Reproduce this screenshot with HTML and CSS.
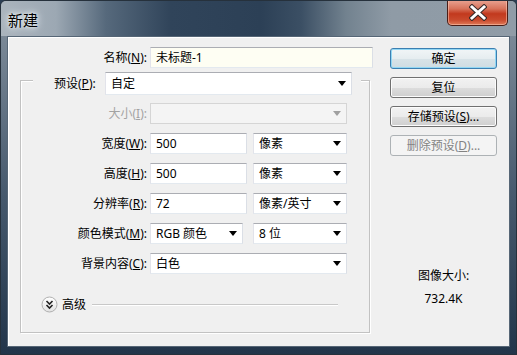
FILE: index.html
```html
<!DOCTYPE html>
<html lang="zh-CN">
<head>
	<meta charset="UTF-8">
	<meta name="viewport" content="width=device-width, initial-scale=1.0">
	<title>新建</title>
	<link rel="stylesheet" href="styles.css">
</head>
<body>
	<div class="window">
		<header class="titlebar">
			<span class="title">新建</span>
			<div class="close">
				<svg width="18" height="17" viewBox="0 0 18 17">
					<path d="M3 3 L15 14 M15 3 L3 14" stroke="#3a2a28" stroke-width="5" stroke-linecap="square" fill="none"/>
					<path d="M3 3 L15 14 M15 3 L3 14" stroke="#fff" stroke-width="3" stroke-linecap="square" fill="none"/>
				</svg>
			</div>
		</header>
		<div class="client">
			<div class="left">
				<div class="row name-row">
					<label class="lbl">名称(<u>N</u>):</label>
					<span class="field text name">未标题-1</span>
				</div>
				<div class="group">
					<div class="preset-row">
						<label class="plbl">预设(<u>P</u>):</label>
						<span class="field select preset">自定<i class="arrow"></i></span>
					</div>
					<div class="row disabled">
						<label class="lbl">大小(<u>I</u>):</label>
						<span class="field select full"><i class="arrow"></i></span>
					</div>
					<div class="row">
						<label class="lbl">宽度(<u>W</u>):</label>
						<span class="field text num">500</span>
						<span class="field select unit">像素<i class="arrow"></i></span>
					</div>
					<div class="row">
						<label class="lbl">高度(<u>H</u>):</label>
						<span class="field text num">500</span>
						<span class="field select unit">像素<i class="arrow"></i></span>
					</div>
					<div class="row">
						<label class="lbl">分辨率(<u>R</u>):</label>
						<span class="field text num">72</span>
						<span class="field select unit">像素/英寸<i class="arrow"></i></span>
					</div>
					<div class="row">
						<label class="lbl">颜色模式(<u>M</u>):</label>
						<span class="field select mode">RGB 颜色<i class="arrow"></i></span>
						<span class="field select unit">8 位<i class="arrow"></i></span>
					</div>
					<div class="row">
						<label class="lbl">背景内容(<u>C</u>):</label>
						<span class="field select full">白色<i class="arrow"></i></span>
					</div>
					<div class="advanced">
						<svg class="adv-icon" width="17" height="17" viewBox="0 0 17 17">
							<defs>
								<linearGradient id="advg" x1="0" y1="0" x2="0" y2="1">
									<stop offset="0" stop-color="#ffffff"/>
									<stop offset="1" stop-color="#e2e2e2"/>
								</linearGradient>
							</defs>
							<circle cx="8.5" cy="8.5" r="7.5" fill="url(#advg)" stroke="#b0b0b0"/>
							<path d="M5.5 5 L8.5 8 L11.5 5 M5.5 9 L8.5 12 L11.5 9" stroke="#222" stroke-width="1.6" fill="none"/>
						</svg>
						<span class="adv-text">高级</span>
						<span class="adv-line"></span>
					</div>
				</div>
			</div>
			<div class="right">
				<div class="btn default">确定</div>
				<div class="btn">复位</div>
				<div class="btn">存储预设(<u>S</u>)...</div>
				<div class="btn off">删除预设(<u>D</u>)...</div>
				<div class="size-info">
					<div>图像大小:</div>
					<div>732.4K</div>
				</div>
			</div>
		</div>
	</div>
</body>
</html>
```

FILE: styles.css
```css
body {
	margin: 0;
	padding: 0;
	background-color: #2b3e53;
	font-family: "Noto Sans", "Noto Sans CJK SC", sans-serif;
	font-size: 12px;
	color: #000;
}
.window {
	width: 517px;
	height: 355px;
	box-sizing: border-box;
	border: 1px solid #26313c;
	border-radius: 6px 6px 0 0;
	background: linear-gradient(to bottom, #8693a0, #46596d 55%, #22354a);
	display: flex;
	flex-direction: column;
	overflow: hidden;
}
.titlebar {
	height: 35px;
	flex-shrink: 0;
	display: flex;
	justify-content: space-between;
	align-items: flex-start;
	background: linear-gradient(90deg, #aab4bd 0px, #9ca8b3 55px, #56697c 105px, #30445a 170px, #2c4056 260px, #3b4f64 300px, #72828f 345px, #8f9ba6 390px, #909ca7 516px);
}
.title {
	font-family: "Noto Sans CJK SC", sans-serif;
	font-size: 15px;
	line-height: 20px;
	margin: 9px 0 0 7px;
	text-shadow: 0 0 6px #e8eef2, 0 0 3px #e8eef2, 0 0 10px #dfe6ec;
}
.close {
	width: 61px;
	height: 26px;
	box-sizing: border-box;
	margin: -1px 8px 0 0;
	border: 1px solid #4a1d16;
	border-top: none;
	border-radius: 0 0 5px 5px;
	background: linear-gradient(to bottom, #e9a493 0%, #d7735b 35%, #c2391e 55%, #c94a2d 80%, #e07a58 100%);
	box-shadow: inset 0 0 0 1px rgba(255, 210, 190, 0.5);
	display: flex;
	align-items: center;
	justify-content: center;
}
.client {
	flex: 1;
	margin: 0 6px 7px 6px;
	border: 1px solid #566676;
	background-color: #f0f0f0;
	box-shadow: inset 1px 1px 0 #fff;
	display: flex;
}
.left {
	width: 353px;
	margin-left: 12px;
	padding-top: 10px;
}
.row {
	display: flex;
	height: 21px;
	align-items: center;
}
.lbl {
	width: 126px;
	margin-right: 3px;
	text-align: right;
	white-space: nowrap;
	line-height: 16px;
}
.name-row .lbl {
	width: 127px;
}
.field {
	height: 21px;
	box-sizing: border-box;
	border: 1px solid;
	border-color: #abadb3 #dbdfe6 #e3e9ef #e2e3ea;
	background-color: #fff;
	padding-left: 5px;
	line-height: 19px;
	white-space: nowrap;
	position: relative;
}
.name {
	width: 223px;
	background-color: #fefef3;
}
.num {
	width: 97px;
}
.unit {
	width: 94px;
	margin-left: 6px;
}
.mode {
	width: 93px;
}
.mode + .unit {
	margin-left: 10px;
}
.full {
	width: 197px;
}
.arrow {
	position: absolute;
	right: 5px;
	top: 7px;
	width: 0;
	height: 0;
	border-left: 4.5px solid transparent;
	border-right: 4.5px solid transparent;
	border-top: 5px solid #000;
}
.group {
	width: 350px;
	box-sizing: border-box;
	margin-top: 12px;
	border: 1px solid #c2c2c2;
	box-shadow: 1px 1px 0 #fff, inset 1px 1px 0 #fff;
	padding-bottom: 19px;
}
.group .row {
	margin-top: 9px;
}
.preset-row {
	display: flex;
	align-items: center;
	height: 23px;
	margin: -9px 8px 0 12px;
	padding: 0 7px 0 21px;
	background-color: #f0f0f0;
}
.plbl {
	width: 49px;
	margin-right: 2px;
	white-space: nowrap;
	line-height: 16px;
}
.preset {
	width: 247px;
	height: 23px;
	line-height: 21px;
}
.preset .arrow {
	top: 8px;
}
.group .row.disabled {
	margin-top: 8px;
}
.disabled .lbl {
	color: #a3a3a3;
}
.disabled .field {
	background-color: #f4f4f4;
	border-color: #d5d5d5;
}
.disabled .arrow {
	border-top-color: #a0a0a0;
}
.advanced {
	display: flex;
	align-items: center;
	height: 17px;
	margin: 22px 31px 0 20px;
}
.adv-text {
	margin-left: 4px;
	line-height: 16px;
}
.adv-line {
	flex: 1;
	margin-left: 6px;
	height: 1px;
	background-color: #c8c8c8;
	box-shadow: 0 1px 0 #fff;
}
.right {
	width: 107px;
	margin-left: 17px;
	padding-top: 11px;
}
.btn {
	height: 21px;
	box-sizing: border-box;
	margin-bottom: 8px;
	border: 1px solid #707070;
	border-radius: 3px;
	background: linear-gradient(to bottom, #f2f2f2 0%, #ebebeb 50%, #dddddd 51%, #cfcfcf 100%);
	box-shadow: inset 0 0 0 1px #fcfcfc;
	text-align: center;
	line-height: 19px;
	white-space: nowrap;
}
.btn.default {
	border-color: #3c7fb1;
	background: linear-gradient(to bottom, #f1f5f7 0%, #e6edf0 50%, #d8e3e8 51%, #cfdce2 100%);
	box-shadow: inset 0 0 0 1px #92d7f4;
}
.btn.off {
	border-color: #adb2b5;
	background: #f4f4f4;
	box-shadow: none;
	color: #838383;
}
.size-info {
	margin-top: 108px;
	text-align: center;
	line-height: 23px;
}
```
